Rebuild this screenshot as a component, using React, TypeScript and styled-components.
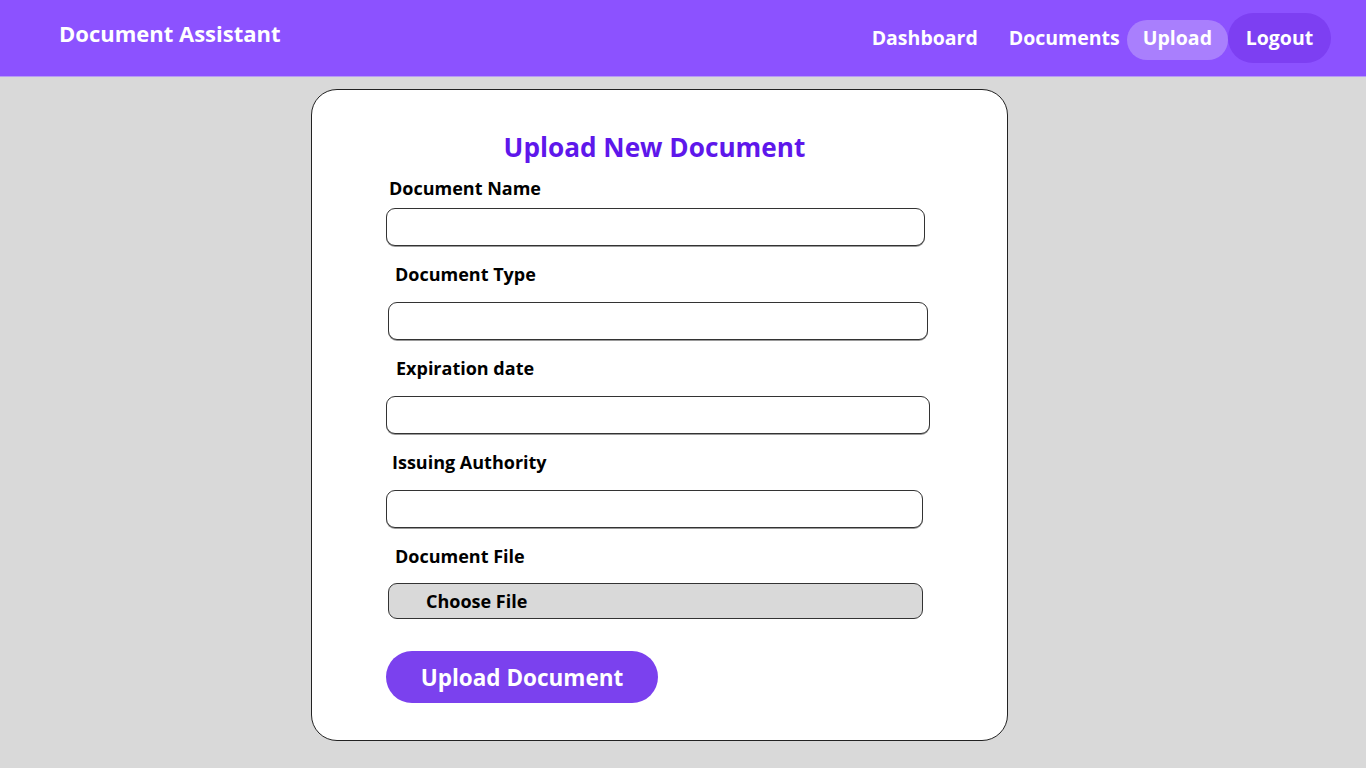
import React from "react";
import styled, { createGlobalStyle } from "styled-components";

const Global = createGlobalStyle`
  html, body { margin: 0; padding: 0; background: #d9d9d9; }
  body { font-family: "Open Sans", "Noto Sans", sans-serif; }
  * { box-sizing: border-box; }
`;

const Page = styled.div`
  min-height: 768px;
  background: #d9d9d9;
`;

const Header = styled.header`
  height: 77px;
  background: #8c52ff;
  border-bottom: 1px solid #b69bf5;
  display: flex;
  align-items: center;
  justify-content: space-between;
  padding: 0 35px 0 59px;
`;

const Brand = styled.div`
  color: #fff;
  font-weight: 700;
  font-size: 22px;
  margin-top: -10px;
`;

const Nav = styled.nav`
  display: flex;
  align-items: center;
`;

const NavItem = styled.a<{ $variant?: "plain" | "active" | "dark"; $space?: number }>`
  color: #fff;
  font-weight: 700;
  font-size: 19.5px;
  text-decoration: none;
  display: flex;
  align-items: center;
  justify-content: center;
  border-radius: 26px;
  height: ${(p) => (p.$variant === "dark" ? "50px" : "40px")};
  padding: ${(p) =>
    p.$variant === "plain" ? "0 0 2px" : p.$variant === "active" ? "0 16px 5px" : "0 16px 1px"};
  margin-right: ${(p) => p.$space ?? 0}px;
  margin-top: ${(p) => (p.$variant === "active" ? "4px" : "0")};
  background: ${(p) =>
    p.$variant === "active" ? "#a97ffd" : p.$variant === "dark" ? "#7d3ff2" : "transparent"};
  min-width: ${(p) => (p.$variant === "dark" ? "103px" : "auto")};
`;

const Main = styled.main`
  padding: 12px 0 28px 311px;
`;

const Card = styled.section`
  width: 697px;
  height: 652px;
  background: #fff;
  border: 1px solid #222;
  border-radius: 26px;
  padding: 39px 0 0 75px;
  display: flex;
  flex-direction: column;
`;

const Title = styled.h1`
  margin: 0 0 11px -81px;
  width: 697px;
  text-align: center;
  color: #5e17eb;
  font-size: 26.2px;
  line-height: 36px;
  font-weight: 700;
`;

const Field = styled.div<{ $gap: number; $after: number }>`
  display: flex;
  flex-direction: column;
  gap: ${(p) => p.$gap}px;
  margin-bottom: ${(p) => p.$after}px;
`;

const Label = styled.label<{ $indent: number }>`
  display: block;
  font-weight: 700;
  font-size: 18px;
  line-height: 24px;
  color: #000;
  padding-left: ${(p) => p.$indent}px;
`;

const Input = styled.input<{ $shift: number; $width: number }>`
  display: block;
  margin-left: ${(p) => p.$shift}px;
  width: ${(p) => p.$width}px;
  height: 38px;
  border: 1px solid #333;
  border-radius: 9px;
  background: #fff;
  outline: none;
  box-shadow: 0 1px 0 #9a9a9a;
`;

const FileBox = styled.div<{ $shift: number; $width: number }>`
  margin-left: ${(p) => p.$shift}px;
  width: ${(p) => p.$width}px;
  height: 36px;
  border: 1px solid #333;
  border-radius: 9px;
  background: #d9d9d9;
  display: flex;
  align-items: center;
  padding-left: 37px;
  font-weight: 700;
  font-size: 18px;
  color: #000;
`;

const SubmitButton = styled.button`
  margin-top: 32px;
  margin-left: -1px;
  width: 272px;
  height: 52px;
  border: none;
  border-radius: 26px;
  background: #7b41ee;
  color: #fff;
  font-family: inherit;
  font-weight: 700;
  font-size: 22.5px;
  display: flex;
  align-items: center;
  justify-content: center;
`;

const fields = [
  { label: "Document Name", indent: 2, gap: 8, shift: -1, width: 539, after: 16 },
  { label: "Document Type", indent: 8, gap: 16, shift: 1, width: 540, after: 16 },
  { label: "Expiration date", indent: 9, gap: 16, shift: -1, width: 544, after: 16 },
  { label: "Issuing Authority", indent: 5, gap: 16, shift: -1, width: 537, after: 16 },
];

export default function App() {
  return (
    <Page>
      <Global />
      <Header>
        <Brand>Document Assistant</Brand>
        <Nav>
          <NavItem $variant="plain" $space={31}>Dashboard</NavItem>
          <NavItem $variant="plain" $space={7}>Documents</NavItem>
          <NavItem $variant="active">Upload</NavItem>
          <NavItem $variant="dark">Logout</NavItem>
        </Nav>
      </Header>
      <Main>
        <Card>
          <Title>Upload New Document</Title>
          {fields.map((f) => (
            <Field key={f.label} $gap={f.gap} $after={f.after}>
              <Label $indent={f.indent}>{f.label}</Label>
              <Input $shift={f.shift} $width={f.width} />
            </Field>
          ))}
          <Field $gap={15} $after={0}>
            <Label $indent={8}>Document File</Label>
            <FileBox $shift={1} $width={535}>Choose File</FileBox>
          </Field>
          <SubmitButton>Upload Document</SubmitButton>
        </Card>
      </Main>
    </Page>
  );
}
